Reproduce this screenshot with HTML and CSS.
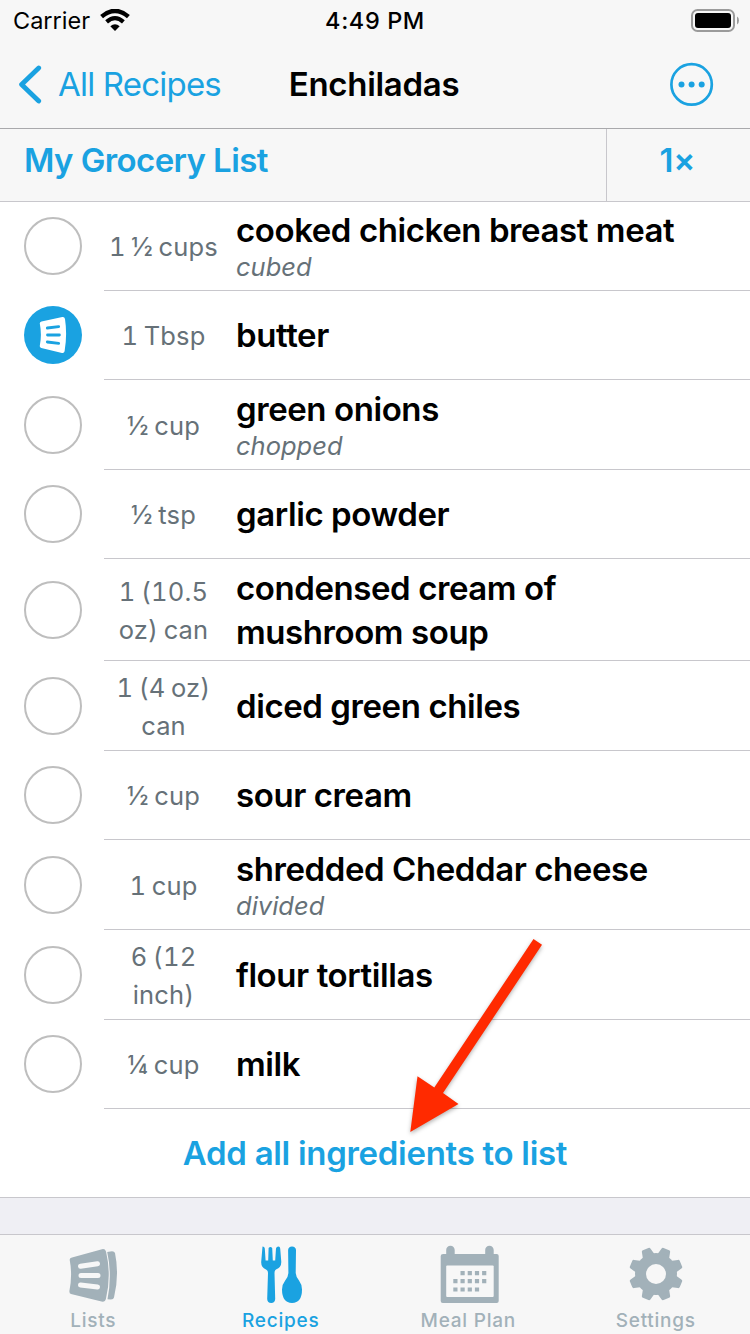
FILE: index.html
```html
<!DOCTYPE html>
<html lang="en">
<head>
    <meta charset="utf-8" />
    <title>Enchiladas</title>
    <link rel="stylesheet" href="styles.css">
</head>
<body>
    <div class="status">
        <div class="carrier">
            <span>Carrier</span>
            <svg width="30" height="22" viewBox="0 0 30 22">
                <path d="M1.6 7.6 Q15 -3.8 28.4 7.6" fill="none" stroke="#000" stroke-width="4.4" />
                <path d="M6.6 12.8 Q15 5.4 23.4 12.8" fill="none" stroke="#000" stroke-width="4.2" />
                <path d="M10.3 17.3 Q15 13.2 19.7 17.3 L15 22 Z" />
            </svg>
        </div>
        <div class="time">4:49 PM</div>
        <svg class="battery" width="49" height="23" viewBox="0 0 49 23">
            <rect x="1" y="1" width="42" height="21" rx="5.5" fill="none" stroke="#9b9b9b" stroke-width="2" />
            <rect x="4" y="4" width="36" height="15" rx="3" />
            <path d="M46 7.5 Q48 8.5 48 11.5 Q48 14.5 46 15.5 Z" fill="#9b9b9b" />
        </svg>
    </div>

    <div class="nav">
        <div class="back">
            <svg width="25" height="40" viewBox="0 0 25 40">
                <path d="M21.7 4 L4.6 20.5 L21.7 37" fill="none" stroke="#1aa2e1" stroke-width="4.8" stroke-linecap="round" stroke-linejoin="round" />
            </svg>
            <span>All Recipes</span>
        </div>
        <div class="title">Enchiladas</div>
        <svg class="more" width="44" height="44" viewBox="0 0 44 44">
            <circle cx="21.6" cy="22.4" r="20.2" fill="none" stroke="#1aa2e1" stroke-width="2.7" />
            <circle cx="11.5" cy="22.4" r="3" fill="#1aa2e1" />
            <circle cx="21.6" cy="22.4" r="3" fill="#1aa2e1" />
            <circle cx="31.7" cy="22.4" r="3" fill="#1aa2e1" />
        </svg>
    </div>

    <div class="listbar">
        <div class="listname">My Grocery List</div>
        <div class="scale">1×</div>
    </div>

    <div class="rows">
        <div class="row">
            <div class="check"></div>
            <div class="item">
                <div class="amount">1 ½ cups</div>
                <div><div class="name">cooked chicken breast meat</div><div class="note">cubed</div></div>
            </div>
        </div>
        <div class="row">
            <div class="check checked">
                <svg width="28" height="38" viewBox="0 0 28 38">
                    <path d="M2.5 5.5 L23.3 1 Q25.5 .6 26 3 Q28.4 19 25.6 35.2 Q25.2 37.3 23 36.9 L2.3 32 Q.5 31.5 .8 29.8 Q3 19 .8 7.6 Q.6 6 2.5 5.5 Z" fill="#fff" />
                    <path d="M8.3 12 L19.7 10.7 M8.5 19 H20.4 M8.3 26 L19.7 27.4" fill="none" stroke="#1aa2e1" stroke-width="2.8" stroke-linecap="round" />
                </svg>
            </div>
            <div class="item">
                <div class="amount">1 Tbsp</div>
                <div class="name">butter</div>
            </div>
        </div>
        <div class="row tall">
            <div class="check"></div>
            <div class="item">
                <div class="amount">½ cup</div>
                <div><div class="name">green onions</div><div class="note">chopped</div></div>
            </div>
        </div>
        <div class="row">
            <div class="check"></div>
            <div class="item">
                <div class="amount">½ tsp</div>
                <div class="name">garlic powder</div>
            </div>
        </div>
        <div class="row double">
            <div class="check"></div>
            <div class="item">
                <div class="amount">1 (10.5<br>oz) can</div>
                <div class="name">condensed cream of<br>mushroom soup</div>
            </div>
        </div>
        <div class="row tall">
            <div class="check"></div>
            <div class="item">
                <div class="amount">1 (4 oz)<br>can</div>
                <div class="name">diced green chiles</div>
            </div>
        </div>
        <div class="row">
            <div class="check"></div>
            <div class="item">
                <div class="amount">½ cup</div>
                <div class="name">sour cream</div>
            </div>
        </div>
        <div class="row tall">
            <div class="check"></div>
            <div class="item">
                <div class="amount">1 cup</div>
                <div><div class="name">shredded Cheddar cheese</div><div class="note">divided</div></div>
            </div>
        </div>
        <div class="row tall">
            <div class="check"></div>
            <div class="item">
                <div class="amount">6 (12<br>inch)</div>
                <div class="name">flour tortillas</div>
            </div>
        </div>
        <div class="row">
            <div class="check"></div>
            <div class="item">
                <div class="amount">¼ cup</div>
                <div class="name">milk</div>
            </div>
        </div>
        <div class="addall">Add all ingredients to list</div>

        <svg class="arrow" width="150" height="210" viewBox="400 930 150 210">
            <path d="M533.5 939 L542 944.8 L443 1093 L458.5 1104 L410.3 1132 L417.5 1076.3 L434.3 1087.5 Z" fill="#ff2a00" />
        </svg>
    </div>

    <div class="tabs">
        <div class="tab">
            <svg width="60" height="60" viewBox="1 0 60 60">
                <path d="M9 12.4 L39 4.2 Q42 3.5 43 6.5 Q48.5 30 43 53.5 Q42 57.5 38.5 56.6 L8 49 Q6.2 48.4 6.4 46 Q9.6 30 6.7 15 Q6.5 13 9 12.4 Z" />
                <path d="M44.2 7 L49 6.2 Q51.4 6.2 52 8 Q56.5 30 51 52.5 Q50.5 54.5 48 54.5 L44.5 54.2 Q49.3 30 44.2 7 Z" />
                <path d="M17.5 21.2 L34.5 18.8 M18 30.5 H35 M17.5 40 L34.5 42" fill="none" stroke="#f7f7f7" stroke-width="5" stroke-linecap="round" />
            </svg>
            <span>Lists</span>
        </div>
        <div class="tab active">
            <svg width="60" height="60" viewBox="1 0 60 60">
                <path d="M12.5 1.5 Q14.6 1.5 14.8 3.5 L15.6 15.5 H18.2 L18.6 3 Q20.4 1 22.2 3 L22.8 15.5 H25.2 L26 3.5 Q26.4 1.5 28.5 1.5 Q30 1.7 30.2 3.5 L31.3 17 Q31.3 22.5 26 24.5 Q24.5 25.5 24.5 28 L25.2 54 Q24.9 58 21.2 58 Q17.4 58 17.2 54 L18 28 Q18 25.5 16 24.5 Q11 22 11.2 17 Z" />
                <path d="M38.1 5 Q38.4 1.5 42 1.5 Q45.7 1.5 46 5 L45.7 28 Q46 32 49 35.5 Q52 39.5 52 44.5 Q52 57.7 42 58 Q32.1 57.7 32 44.5 Q32 39.5 35.2 35.5 Q38.2 32 38.4 28 Z" />
            </svg>
            <span>Recipes</span>
        </div>
        <div class="tab">
            <svg width="60" height="60" viewBox="-.7 0 60 60">
                <path d="M3.5 9 H6.5 V5 A4 4 0 0 1 15 5 V9 H45.5 V5 A4 4 0 0 1 54 5 V9 H57 Q59 9 59 11 V56 Q59 58 57 58 H3 Q1 58 1 56 V11 Q1 9 3.5 9 Z" />
                <rect x="6.5" y="20.5" width="47.5" height="31.5" rx="1" fill="#f7f7f7" />
                <path d="M20.8 28.2 H48 M13.6 36.2 H48 M13.6 44.5 H41" fill="none" stroke="#a2b1b9" stroke-width="4.2" stroke-dasharray="4.2 3" />
            </svg>
            <span>Meal Plan</span>
        </div>
        <div class="tab">
            <svg width="60" height="60" viewBox="-30 -29 60 60">
                <g transform="rotate(22.5)">
                    <path id="tooth" d="M-6.5 -18 L-4.7 -25.5 Q-4.4 -27 -3 -27 H3 Q4.4 -27 4.7 -25.5 L6.5 -18 V18 L4.7 25.5 Q4.4 27 3 27 H-3 Q-4.4 27 -4.7 25.5 L-6.5 18 Z" />
                    <use href="#tooth" transform="rotate(45)" />
                    <use href="#tooth" transform="rotate(90)" />
                    <use href="#tooth" transform="rotate(135)" />
                </g>
                <circle r="21" />
                <circle r="10" fill="#f7f7f7" />
            </svg>
            <span>Settings</span>
        </div>
    </div>
</body>
</html>
```
FILE: styles.css
```css
* {
    margin: 0;
    padding: 0;
    box-sizing: border-box;
}

body {
    width: 750px;
    height: 1334px;
    display: flex;
    flex-direction: column;
    background: #efeff4;
    font-family: Inter, "Liberation Sans", sans-serif;
    color: #000;
    overflow: hidden;
}

svg {
    display: block;
}

.status {
    height: 40px;
    padding: 0 10px;
    display: grid;
    grid-template-columns: 1fr auto 1fr;
    align-items: center;
    background: #f7f7f7;
    font-size: 23.5px;
}

.carrier {
    padding-left: 3px;
    display: flex;
    align-items: center;
    gap: 10px;
}

.time {
    font-weight: 500;
    letter-spacing: 0.6px;
}

.battery {
    justify-self: end;
}

.nav {
    height: 89px;
    padding: 0 19px 0 17px;
    display: grid;
    grid-template-columns: 1fr auto 1fr;
    align-items: center;
    background: #f7f7f7;
    border-bottom: 1px solid #a9a9ac;
    font-size: 33px;
}

.back {
    display: flex;
    align-items: center;
    gap: 16px;
    color: #1aa2e1;
    letter-spacing: -0.8px;
}

.title {
    font-weight: 600;
    letter-spacing: -0.3px;
}

.more {
    margin-right: 17px;
    justify-self: end;
}

.listbar {
    height: 73px;
    display: flex;
    background: #f7f7f7;
    border-bottom: 1px solid #c8c7cc;
    color: #1aa2e1;
    font-size: 33px;
    font-weight: 600;
    line-height: 62px;
}

.listname {
    flex: 1;
    padding-left: 24px;
    letter-spacing: -0.6px;
}

.scale {
    width: 144px;
    padding-right: 2px;
    border-left: 1px solid #c8c7cc;
    text-align: center;
    font-feature-settings: "calt" 0;
}

.rows {
    position: relative;
    background: #fff;
    border-bottom: 1px solid #c8c7cc;
}

.row {
    height: 89px;
    padding-left: 24px;
    display: flex;
    align-items: center;
    gap: 22px;
}

.tall {
    height: 90px;
}

.double {
    height: 102px;
}

.check {
    width: 58px;
    height: 58px;
    margin-bottom: 1px;
    border: 2px solid #bebebe;
    border-radius: 50%;
}

.checked {
    display: flex;
    align-items: center;
    justify-content: center;
    background: #1aa2e1;
    border: none;
}

.item {
    flex: 1;
    height: 100%;
    display: flex;
    align-items: center;
    gap: 13px;
    border-bottom: 1px solid #c8c7cc;
}

.amount {
    width: 119px;
    padding-top: 2px;
    text-align: center;
    color: #667178;
    font-size: 25.5px;
    font-variant-numeric: tabular-nums;
    line-height: 38px;
    letter-spacing: 0.15px;
    word-spacing: -1.5px;
}

.name {
    font-size: 33px;
    font-weight: 600;
    line-height: 44px;
    letter-spacing: -0.42px;
}

.note {
    padding-bottom: 2px;
    color: #667178;
    font-size: 25.5px;
    font-style: italic;
    line-height: 30px;
}

.addall {
    height: 88px;
    color: #1aa2e1;
    font-size: 33px;
    font-weight: 600;
    line-height: 88px;
    letter-spacing: -0.3px;
    text-align: center;
}

/* red pointer over the list */
.arrow {
    position: absolute;
    left: 400px;
    top: 728px;
    filter: drop-shadow(0 2px 2px rgba(0, 0, 0, 0.3));
}

.tabs {
    height: 100px;
    margin-top: auto;
    display: grid;
    grid-template-columns: repeat(4, 187.5px);
    background: #f7f7f7;
    border-top: 1px solid #c8c7cc;
}

.tab {
    padding-top: 10px;
    display: flex;
    flex-direction: column;
    align-items: center;
    color: #a2b1b9;
    fill: #a2b1b9;
    font-size: 19px;
    font-weight: 550;
    line-height: 32px;
    letter-spacing: 0.75px;
}

.tab span {
    margin-right: 1px;
}

.active {
    color: #1aa2e1;
    fill: #1aa2e1;
}
```
